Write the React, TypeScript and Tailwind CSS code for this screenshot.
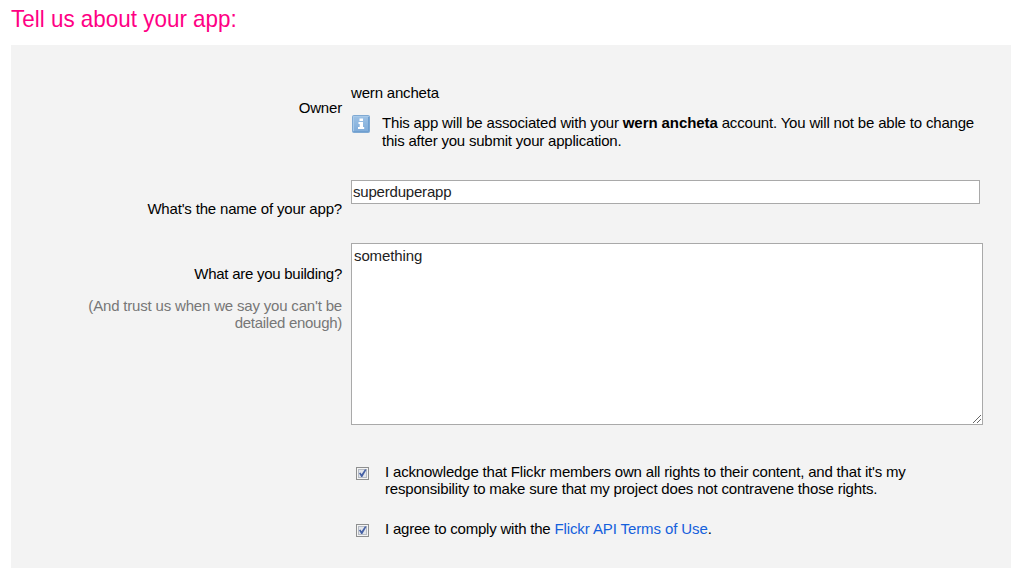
import React from "react";

const labelCol = "w-[331px] shrink-0 text-right leading-[17px]";

function InfoIcon() {
  return (
    <svg width="18" height="18" viewBox="0 0 18 18" className="mt-px shrink-0">
      <defs>
        <linearGradient id="infoFill" x1="0" y1="0" x2="0" y2="1">
          <stop offset="0" stopColor="#9fc3e6" />
          <stop offset="1" stopColor="#7eabd9" />
        </linearGradient>
      </defs>
      <rect x="0.5" y="0.5" width="17" height="17" rx="1" fill="url(#infoFill)" stroke="#7fa9d3" />
      <path d="M1.5 16V1.5H16" fill="none" stroke="#a9cae9" />
      <path d="M1.5 16.5h15V2" fill="none" stroke="#6f9fd0" />
      <path d="M7.5 3.5H11v2.500H7.500zM6.500 7H11v5h1.200v2H6v-2h1.700V9H6.500z" fill="#fff" />
    </svg>
  );
}

function CheckBox() {
  return (
    <svg width="13" height="13" viewBox="0 0 13 13" className="shrink-0">
      <rect x="0.5" y="0.5" width="12" height="12" fill="#f4f4f4" stroke="#8e8f8f" />
      <rect x="2.5" y="2.5" width="8" height="8" fill="#e2e5ea" stroke="#b6bbc4" />
      <path d="M3 6.200L4.500 5.500L5.600 7.300L9 2.200L10.500 2.800L6.300 10H5.200z" fill="#4560a5" />
    </svg>
  );
}

export default function App() {
  return (
    <div className="h-[568px] w-[1029px] overflow-hidden bg-white pl-[11px] font-['Liberation_Sans',Arial,sans-serif] text-[15px] tracking-[-0.18px] text-black">
      <h1 className="h-[45px] pt-[5px] text-[24px] leading-[28px] tracking-normal text-[#ff0084]">
        <span className="inline-block origin-left scale-x-[0.935] whitespace-nowrap">Tell us about your app:</span>
      </h1>
      <main className="h-[523px] w-[1000px] bg-[#f3f3f3] pt-[39px]">
        <section className="flex h-[96px] gap-[9px]">
          <div className={labelCol + " pt-[15px]"}>Owner</div>
          <div>
            <div className="leading-[18px]">wern ancheta</div>
            <div className="mt-[12px] flex pl-px">
              <InfoIcon />
              <p className="ml-3 whitespace-nowrap leading-[18px]">
                This app will be associated with your <b className="tracking-[-0.08px]">wern ancheta</b> account. You will not be able to change
                <br />
                <span className="tracking-[-0.21px]">this after you submit your application.</span>
              </p>
            </div>
          </div>
        </section>
        <section className="flex h-[63px] gap-[9px]">
          <div className={labelCol + " pt-[20px]"}>What's the name of your app?</div>
          <div className="h-[24px] w-[629px] border border-[#a9a9a9] bg-white pl-px leading-[22px] tracking-[-0.2px] text-[#222]">
            superduperapp
          </div>
        </section>
        <section className="flex h-[220px] gap-[9px]">
          <div className={labelCol + " pt-[22px]"}>
            <span className="tracking-[-0.26px]">What are you building?</span>
            <p className="mt-[15px] text-[#777]">
              (And trust us when we say you can't be
              <br />
              <span className="tracking-[-0.28px]">detailed enough)</span>
            </p>
          </div>
          <div className="flex h-[182px] w-[632px] items-end justify-between border border-[#a9a9a9] bg-white">
            <div className="self-start pl-[2px] pt-[3px] leading-[18px] tracking-[-0.12px] text-[#222]">something</div>
            <svg width="10" height="10" viewBox="0 0 10 10" className="shrink-0">
              <path d="M1 9L9 1M5 9l4-4" stroke="#666" fill="none" />
            </svg>
          </div>
        </section>
        <section className="ml-[345px] flex h-[57px]">
          <div className="pt-[4px]">
            <CheckBox />
          </div>
          <p className="ml-[16px] whitespace-nowrap leading-[17px]">
            I acknowledge that Flickr members own all rights to their content, and that it's my
            <br />
            responsibility to make sure that my project does not contravene those rights.
          </p>
        </section>
        <section className="ml-[345px] flex">
          <div className="pt-[4px]">
            <CheckBox />
          </div>
          <p className="ml-[16px] leading-[17px]">
            <span className="tracking-[-0.21px]">I agree to comply with the </span>
            <a className="tracking-[-0.1px] text-[#1460dc]">Flickr API Terms of Use</a>.
          </p>
        </section>
      </main>
    </div>
  );
}
